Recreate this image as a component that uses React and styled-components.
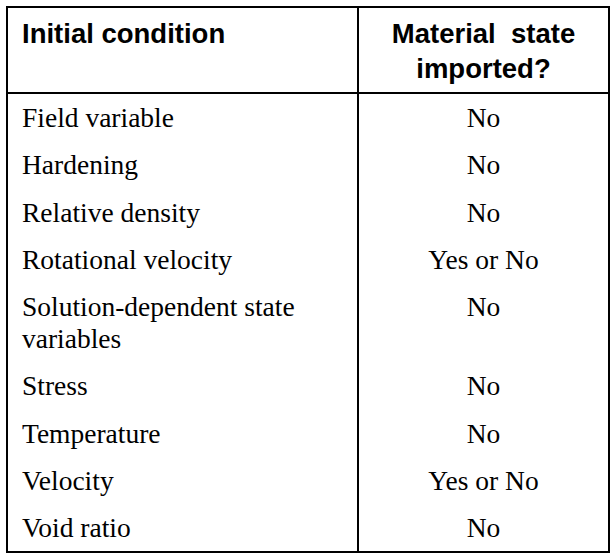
import React from "react";
import styled, { createGlobalStyle } from "styled-components";

const Global = createGlobalStyle`
  html, body { margin: 0; padding: 0; background: #fff; }
  body { width: 615px; height: 557px; overflow: hidden; }
`;

const Page = styled.div`
  padding: 6px;
`;

const Table = styled.table`
  box-sizing: border-box;
  width: 604px;
  border: 2px solid #000;
  border-spacing: 0;
  table-layout: fixed;
  color: #000;
`;

const HeadCell = styled.th`
  box-sizing: border-box;
  vertical-align: top;
  font-family: "Liberation Sans", Arial, sans-serif;
  font-weight: bold;
  font-size: 27.5px;
  line-height: 35px;
  padding: 8px 14px 6px;
  border-bottom: 2px solid #000;
  border-right: ${(p) => (p.$divider ? "2px solid #000" : "none")};
  text-align: ${(p) => (p.$center ? "center" : "left")};
  height: 86px;
`;

const Cell = styled.td`
  box-sizing: border-box;
  vertical-align: top;
  font-family: "Liberation Serif", "Times New Roman", serif;
  font-size: 27.5px;
  line-height: 32px;
  padding: 8px 14px 7.25px;
  border-right: ${(p) => (p.$divider ? "2px solid #000" : "none")};
  text-align: ${(p) => (p.$center ? "center" : "left")};
`;

const rows = [
  ["Field variable", "No"],
  ["Hardening", "No"],
  ["Relative density", "No"],
  ["Rotational velocity", "Yes or No"],
  ["Solution-dependent state variables", "No"],
  ["Stress", "No"],
  ["Temperature", "No"],
  ["Velocity", "Yes or No"],
  ["Void ratio", "No"],
];

export default function App() {
  return (
    <Page>
      <Global />
      <Table>
        <colgroup>
          <col style={{ width: "351px" }} />
          <col style={{ width: "249px" }} />
        </colgroup>
        <thead>
          <tr>
            <HeadCell $divider>Initial condition</HeadCell>
            <HeadCell $center>
              Material{"\u00a0"} state
              <br />
              imported?
            </HeadCell>
          </tr>
        </thead>
        <tbody>
          {rows.map(([name, value]) => (
            <tr key={name}>
              <Cell $divider>{name}</Cell>
              <Cell $center>{value}</Cell>
            </tr>
          ))}
        </tbody>
      </Table>
    </Page>
  );
}
